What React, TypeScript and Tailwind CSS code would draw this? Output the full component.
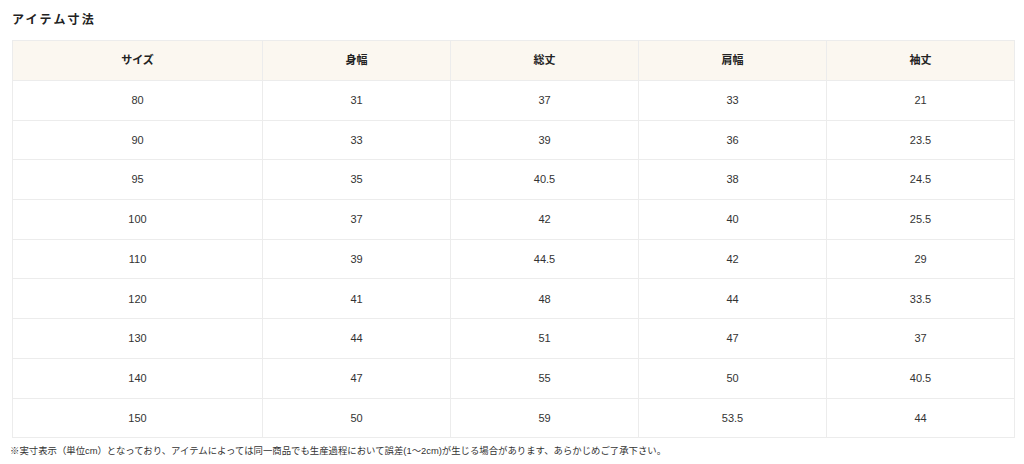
import React from "react";

const headers = ["サイズ", "身幅", "総丈", "肩幅", "袖丈"];
const rows = [
  ["80", "31", "37", "33", "21"],
  ["90", "33", "39", "36", "23.5"],
  ["95", "35", "40.5", "38", "24.5"],
  ["100", "37", "42", "40", "25.5"],
  ["110", "39", "44.5", "42", "29"],
  ["120", "41", "48", "44", "33.5"],
  ["130", "44", "51", "47", "37"],
  ["140", "47", "55", "50", "40.5"],
  ["150", "50", "59", "53.5", "44"],
];

export default function App() {
  return (
    <div
      className="w-[1024px] h-[464px] bg-white text-[#333] overflow-hidden"
      style={{ fontFamily: '"Liberation Sans", "Noto Sans CJK JP", sans-serif' }}
    >
      <div className="pl-[12px] pt-[12px] h-[40px]">
        <h2 className="text-[12px] font-bold tracking-[2.2px] leading-[16px] text-[#222]">アイテム寸法</h2>
      </div>
      <div className="pl-[12px]">
        <table className="w-[1002px] border-collapse table-fixed text-[11px]">
          <colgroup>
            <col className="w-[250px]" />
            <col className="w-[188px]" />
            <col className="w-[188px]" />
            <col className="w-[188px]" />
            <col className="w-[188px]" />
          </colgroup>
          <thead>
            <tr className="h-[40px] bg-[#fbf7f0]">
              {headers.map((h) => (
                <th key={h} className="border border-[#ececec] font-bold text-center text-[#222] p-0">
                  {h}
                </th>
              ))}
            </tr>
          </thead>
          <tbody>
            {rows.map((r, i) => (
              <tr key={i} className="h-[39.7px]">
                {r.map((c, j) => (
                  <td key={j} className="border border-[#ececec] text-center p-0 text-[#333]">
                    {c}
                  </td>
                ))}
              </tr>
            ))}
          </tbody>
        </table>
      </div>
      <p className="pl-[10px] pt-[6px] text-[9.4px] leading-[14px] text-[#333]">
        ※実寸表示（単位cm）となっており、アイテムによっては同一商品でも生産過程において誤差(1〜2cm)が生じる場合があります、あらかじめご了承下さい。
      </p>
    </div>
  );
}
